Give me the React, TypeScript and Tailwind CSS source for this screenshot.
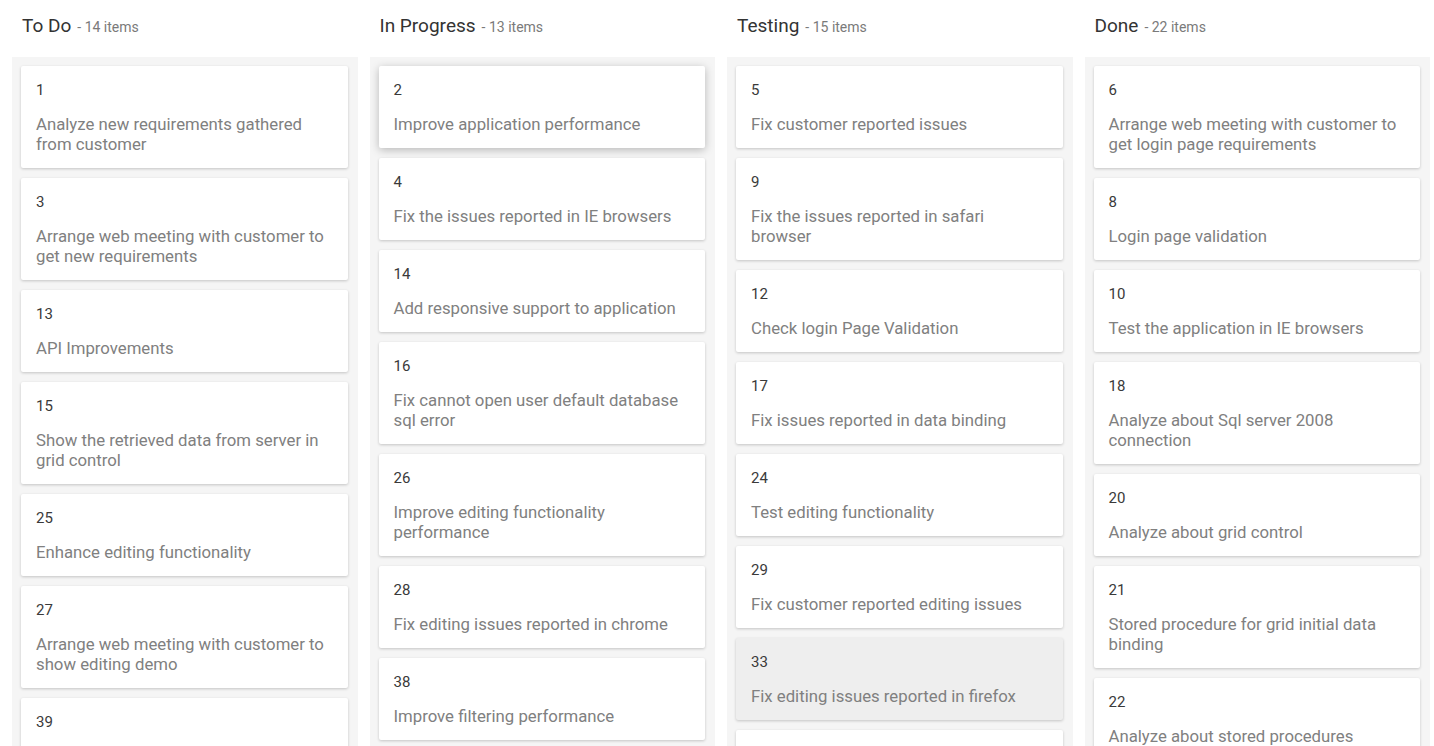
import React from 'react';

type Card = { id: number; title: string; state?: 'hover' | 'selected' };

const columns: { name: string; count: number; cards: Card[] }[] = [
  {
    name: 'To Do',
    count: 14,
    cards: [
      { id: 1, title: 'Analyze new requirements gathered from customer' },
      { id: 3, title: 'Arrange web meeting with customer to get new requirements' },
      { id: 13, title: 'API Improvements' },
      { id: 15, title: 'Show the retrieved data from server in grid control' },
      { id: 25, title: 'Enhance editing functionality' },
      { id: 27, title: 'Arrange web meeting with customer to show editing demo' },
      { id: 39, title: 'Integrate Kanban board with the grid control' },
    ],
  },
  {
    name: 'In Progress',
    count: 13,
    cards: [
      { id: 2, title: 'Improve application performance', state: 'hover' },
      { id: 4, title: 'Fix the issues reported in IE browsers' },
      { id: 14, title: 'Add responsive support to application' },
      { id: 16, title: 'Fix cannot open user default database sql error' },
      { id: 26, title: 'Improve editing functionality performance' },
      { id: 28, title: 'Fix editing issues reported in chrome' },
      { id: 38, title: 'Improve filtering performance' },
      { id: 40, title: 'Fix the filtering issues' },
    ],
  },
  {
    name: 'Testing',
    count: 15,
    cards: [
      { id: 5, title: 'Fix customer reported issues' },
      { id: 9, title: 'Fix the issues reported in safari browser' },
      { id: 12, title: 'Check login Page Validation' },
      { id: 17, title: 'Fix issues reported in data binding' },
      { id: 24, title: 'Test editing functionality' },
      { id: 29, title: 'Fix customer reported editing issues' },
      { id: 33, title: 'Fix editing issues reported in firefox', state: 'selected' },
      { id: 34, title: 'Test the filtering functionality' },
    ],
  },
  {
    name: 'Done',
    count: 22,
    cards: [
      { id: 6, title: 'Arrange web meeting with customer to get login page requirements' },
      { id: 8, title: 'Login page validation' },
      { id: 10, title: 'Test the application in IE browsers' },
      { id: 18, title: 'Analyze about Sql server 2008 connection' },
      { id: 20, title: 'Analyze about grid control' },
      { id: 21, title: 'Stored procedure for grid initial data binding' },
      { id: 22, title: 'Analyze about stored procedures' },
    ],
  },
];

function KanbanCard({ card }: { card: Card }) {
  const look =
    card.state === 'selected'
      ? 'bg-[#eeeeee] shadow-[0_1px_3px_rgba(0,0,0,0.2)]'
      : card.state === 'hover'
        ? 'bg-white shadow-[0_2px_8px_rgba(0,0,0,0.25)]'
        : 'bg-white shadow-[0_1px_3px_rgba(0,0,0,0.2)]';
  return (
    <div className={`w-full shrink-0 rounded-[2px] px-[15px] py-[14px] ${look}`}>
      <div className="text-[15px] leading-5 text-[#3a3a3a]">{card.id}</div>
      <div className="mt-[14px] text-[16.75px] leading-5 text-[#808080]">{card.title}</div>
    </div>
  );
}

export default function App() {
  return (
    <div
      className="flex h-[746px] gap-3 overflow-hidden bg-white pl-3 pr-1"
      style={{ fontFamily: 'Roboto, "Liberation Sans", sans-serif' }}
    >
      {columns.map((col) => (
        <div key={col.name} className="flex min-w-0 flex-1 flex-col">
          <div className="flex h-[57px] shrink-0 items-baseline pl-[10px] pt-[14px] leading-6">
            <span className="text-[19px] text-[#333333]">{col.name}</span>
            <span className="ml-[6px] text-[14px] text-[#7a7a7a]">- {col.count} items</span>
          </div>
          <div className="flex flex-1 flex-col gap-[10px] bg-[#f5f5f5] pl-[9px] pr-[10px] pt-[9px]">
            {col.cards.map((card) => (
              <KanbanCard key={card.id} card={card} />
            ))}
          </div>
        </div>
      ))}
    </div>
  );
}
